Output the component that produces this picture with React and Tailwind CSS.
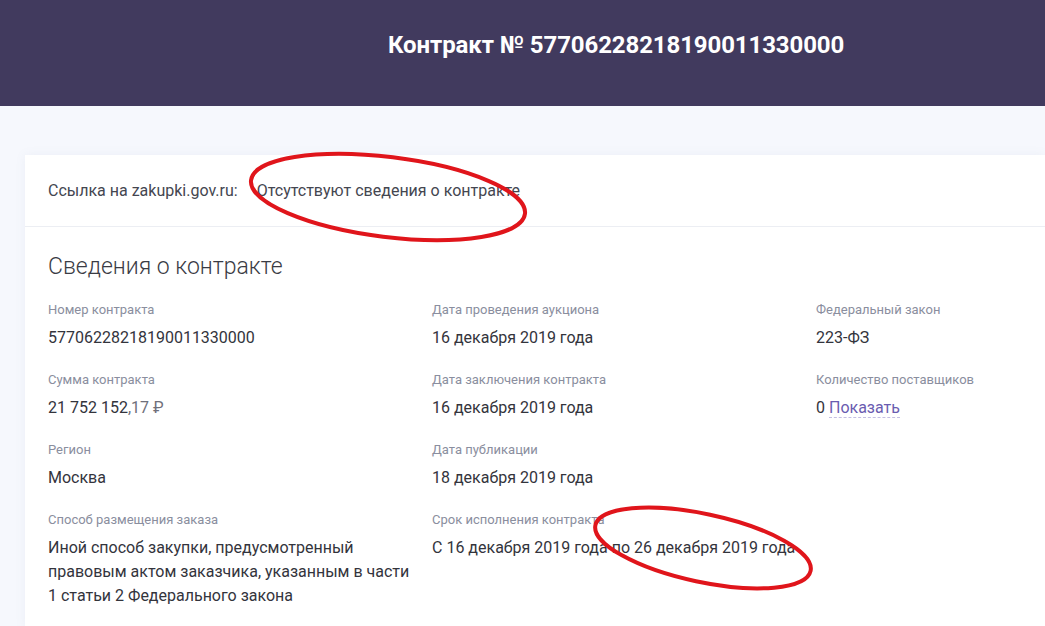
import React from "react";

const rows = [
  [
    { label: "Номер контракта", value: "57706228218190011330000" },
    { label: "Дата проведения аукциона", value: "16 декабря 2019 года" },
    { label: "Федеральный закон", value: "223-ФЗ" },
  ],
  [
    { label: "Сумма контракта", value: "sum" },
    { label: "Дата заключения контракта", value: "16 декабря 2019 года" },
    { label: "Количество поставщиков", value: "suppliers" },
  ],
  [
    { label: "Регион", value: "Москва" },
    { label: "Дата публикации", value: "18 декабря 2019 года" },
    null,
  ],
  [
    {
      label: "Способ размещения заказа",
      value:
        "Иной способ закупки, предусмотренный правовым актом заказчика, указанным в части 1 статьи 2 Федерального закона",
    },
    {
      label: "Срок исполнения контракта",
      value: "С 16 декабря 2019 года по 26 декабря 2019 года",
    },
    null,
  ],
];

function Value({ value }) {
  if (value === "sum") {
    return (
      <span>
        21 752 152<span className="text-[#6f6f7a]">,17 ₽</span>
      </span>
    );
  }
  if (value === "suppliers") {
    return (
      <span>
        0{" "}
        <span className="text-[#6a5cb0] border-b border-dashed border-[#c4bfe3]">
          Показать
        </span>
      </span>
    );
  }
  return <span>{value}</span>;
}

export default function App() {
  return (
    <div
      className="relative min-h-[626px] bg-[#f6f8fd] overflow-hidden"
      style={{ fontFamily: "Roboto, 'Noto Sans', sans-serif" }}
    >
      <div className="h-[106px] bg-[#413a5e] pl-[388px] pt-[29px]">
        <h1 className="text-[24px] font-bold text-white leading-[32px] tracking-[-0.1px]">
          Контракт № 57706228218190011330000
        </h1>
      </div>

      <div className="ml-[25px] mt-[49px] bg-white shadow-[0_0_10px_rgba(120,130,170,0.08)]">
        <div className="h-[72px] flex items-center pl-[23px] text-[16px] text-[#444650] border-b border-[#eceef3]">
          <span>Ссылка на zakupki.gov.ru:</span>
          <span className="ml-[19px]">Отсутствуют сведения о контракте</span>
        </div>

        <div className="pl-[23px] pt-[24px] pb-[20px]">
          <h2 className="text-[23px] font-light text-[#3a3b44] leading-[32px]">
            Сведения о контракте
          </h2>
          <div className="mt-[17px] flex flex-col gap-[20px]">
            {rows.map((row, i) => (
              <div key={i} className="grid grid-cols-[384px_384px_1fr]">
                {row.map((cell, j) =>
                  cell ? (
                    <div key={j} className="pr-4">
                      <div className="text-[13px] text-[#8a8e9e] leading-[20px]">
                        {cell.label}
                      </div>
                      <div className="mt-[6px] text-[16px] text-[#33343c] leading-[24px]">
                        <Value value={cell.value} />
                      </div>
                    </div>
                  ) : (
                    <div key={j} />
                  ),
                )}
              </div>
            ))}
          </div>
        </div>
      </div>

      <svg
        className="absolute inset-0 pointer-events-none"
        width="1045"
        height="626"
        viewBox="0 0 1045 626"
      >
        <ellipse
          cx="388"
          cy="197"
          rx="138"
          ry="40"
          transform="rotate(7 388 197)"
          fill="none"
          stroke="#e0151b"
          strokeWidth="4"
        />
        <ellipse
          cx="703"
          cy="548"
          rx="110"
          ry="34"
          transform="rotate(12 703 548)"
          fill="none"
          stroke="#e0151b"
          strokeWidth="4"
        />
      </svg>
    </div>
  );
}
